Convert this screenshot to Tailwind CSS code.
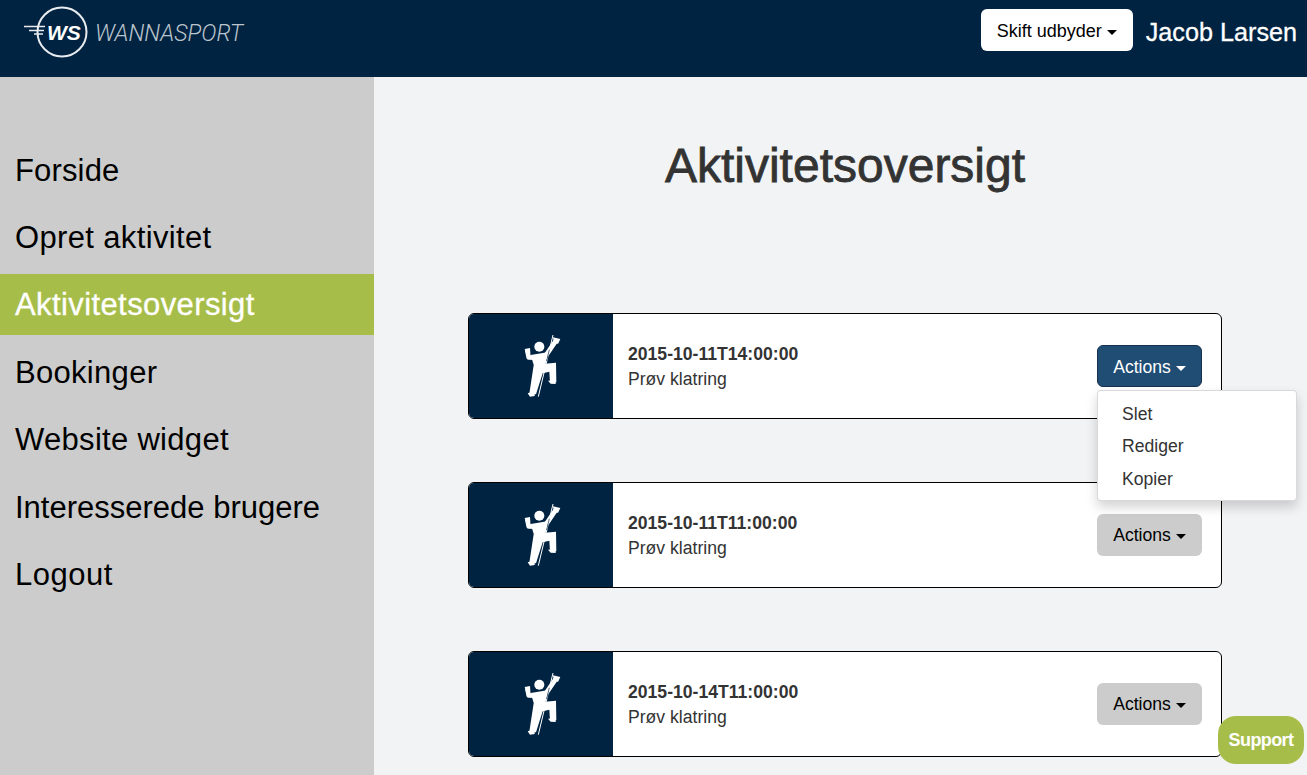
<!DOCTYPE html>
<html lang="en">
<head>
    <meta charset="UTF-8">
    <meta name="viewport" content="width=device-width, initial-scale=1.0">
    <title>Aktivitetsoversigt</title>
    <script src="https://cdn.jsdelivr.net/npm/@tailwindcss/browser@4"></script>
</head>
<body class="relative h-screen overflow-hidden bg-[#f2f3f5] font-['Liberation_Sans',Arial,sans-serif] text-[#333333]">
    <!-- top bar -->
    <header class="flex h-[77px] items-start justify-between bg-[#002342] pl-[24px] pr-[10px]">
        <div class="flex items-center pt-[6px]">
            <svg class="h-[52px] w-[66px] text-white" viewBox="0 0 66 52" fill="none">
                <circle cx="38" cy="26" r="24.5" stroke="#e8ecef" stroke-width="2"/>
                <path d="M0 20.5H21M5 24.5H20M10 28H19" stroke="#e8ecef" stroke-width="1.5"/>
                <text x="23" y="34" fill="#fff" font-family="Liberation Sans" font-size="21" font-weight="700" font-style="italic">WS</text>
            </svg>
            <span class="ml-[5px] mt-[2px] font-['Roboto',sans-serif] text-[23px] font-light italic leading-none text-[#bcc5cc]">WANNASPORT</span>
        </div>
        <div class="flex items-start pt-[9px]">
            <button class="flex h-[42px] w-[152px] items-center justify-center rounded-[6px] bg-white pt-[2px] text-[18px] text-black">
                Skift udbyder<span class="ml-[5px] mt-[2px] border-x-[5px] border-t-[5px] border-x-transparent border-t-black"></span>
            </button>
            <span class="ml-[13px] text-[25.2px] leading-[46px] text-white [-webkit-text-stroke:0.3px_white]">Jacob Larsen</span>
        </div>
    </header>

    <div class="flex h-[698px]">
        <!-- side menu -->
        <nav class="flex w-[374px] shrink-0 flex-col gap-[6.5px] bg-[#cccccc] pt-[62px] text-[31px] leading-[61px] text-black">
            <a class="px-[15px] pt-[2px] leading-[59px] tracking-[0.15px]">Forside</a>
            <a class="px-[15px] tracking-[0.35px]">Opret aktivitet</a>
            <a class="bg-[#a7bd49] px-[15px] tracking-[0.4px] text-white [-webkit-text-stroke:0.3px_white]">Aktivitetsoversigt</a>
            <a class="px-[15px] tracking-[0.3px]">Bookinger</a>
            <a class="px-[15px] tracking-[0.3px]">Website widget</a>
            <a class="px-[15px]">Interesserede brugere</a>
            <a class="px-[15px] tracking-[0.5px]">Logout</a>
        </nav>

        <main class="w-[848px] pl-[94px]">
            <h1 class="mb-[119px] mt-[61px] w-[754px] text-center text-[48px] leading-[56px] [-webkit-text-stroke:0.8px_#333333]">Aktivitetsoversigt</h1>

            <div class="flex w-[754px] flex-col gap-[63px]">
                <!-- open dropdown sits on the first card -->
                <div class="relative flex h-[106px] rounded-[6px] border border-black bg-white">
                    <div class="flex w-[144px] items-center justify-center rounded-l-[5px] bg-[#002342]">
                        <svg class="mb-[2px] h-[80px] w-[70px]" viewBox="0 0 210 240" fill="none">
                            <path d="M141 30L97 215" stroke="#fff" stroke-width="3"/>
                            <circle cx="100" cy="65" r="15" fill="#fff"/>
                            <path d="M64 76L68 97L90 98M122 88L150 47" stroke="#fff" stroke-width="14" stroke-linejoin="round"/>
                            <path d="M56 72L72 69L73 84L60 86ZM141 37L163 42L156 57L143 50Z" fill="#fff"/>
                            <path d="M74 90L128 81L118 120L84 122Z" fill="#fff"/>
                            <path d="M83 121L117 116L150 113L151 172L132 172L130 140L110 145L90 208L70 206Z" fill="#fff"/>
                            <path d="M65 205L86 199L86 213L72 215ZM126 167L149 166L149 177L134 176Z" fill="#fff"/>
                            <path d="M130 74L122 108" stroke="#002342" stroke-width="2"/>
                        </svg>
                    </div>
                    <div class="flex flex-1 items-center justify-between pl-[15px] pr-[19px]">
                        <div class="pt-[2px] text-[17.6px] leading-[25px]">
                            <div class="font-bold">2015-10-11T14:00:00</div>
                            <div>Prøv klatring</div>
                        </div>
                        <button class="flex h-[42px] w-[105px] items-center justify-center rounded-[6px] border border-[#17324d] bg-[#204d74] pt-[2px] text-[17.6px] text-white">
                            Actions<span class="ml-[5px] mt-[2px] border-x-[5px] border-t-[5px] border-x-transparent border-t-white"></span>
                        </button>
                    </div>
                    <ul class="absolute left-[628px] top-[76px] z-10 h-[111px] w-[200px] rounded-[4px] border border-black/15 bg-white py-[7px] text-[17.6px] leading-[32.4px] shadow-[0_6px_12px_rgba(0,0,0,0.175)]">
                        <li class="px-[24px]">Slet</li>
                        <li class="px-[24px]">Rediger</li>
                        <li class="px-[24px]">Kopier</li>
                    </ul>
                </div>

                <div class="flex h-[106px] rounded-[6px] border border-black bg-white">
                    <div class="flex w-[144px] items-center justify-center rounded-l-[5px] bg-[#002342]">
                        <svg class="mb-[2px] h-[80px] w-[70px]" viewBox="0 0 210 240" fill="none">
                            <path d="M141 30L97 215" stroke="#fff" stroke-width="3"/>
                            <circle cx="100" cy="65" r="15" fill="#fff"/>
                            <path d="M64 76L68 97L90 98M122 88L150 47" stroke="#fff" stroke-width="14" stroke-linejoin="round"/>
                            <path d="M56 72L72 69L73 84L60 86ZM141 37L163 42L156 57L143 50Z" fill="#fff"/>
                            <path d="M74 90L128 81L118 120L84 122Z" fill="#fff"/>
                            <path d="M83 121L117 116L150 113L151 172L132 172L130 140L110 145L90 208L70 206Z" fill="#fff"/>
                            <path d="M65 205L86 199L86 213L72 215ZM126 167L149 166L149 177L134 176Z" fill="#fff"/>
                            <path d="M130 74L122 108" stroke="#002342" stroke-width="2"/>
                        </svg>
                    </div>
                    <div class="flex flex-1 items-center justify-between pl-[15px] pr-[19px]">
                        <div class="pt-[2px] text-[17.6px] leading-[25px]">
                            <div class="font-bold">2015-10-11T11:00:00</div>
                            <div>Prøv klatring</div>
                        </div>
                        <button class="flex h-[42px] w-[105px] items-center justify-center rounded-[6px] bg-[#cccccc] pt-[1px] text-[17.6px] text-black">
                            Actions<span class="ml-[5px] mt-[2px] border-x-[5px] border-t-[5px] border-x-transparent border-t-black"></span>
                        </button>
                    </div>
                </div>

                <div class="flex h-[106px] rounded-[6px] border border-black bg-white">
                    <div class="flex w-[144px] items-center justify-center rounded-l-[5px] bg-[#002342]">
                        <svg class="mb-[2px] h-[80px] w-[70px]" viewBox="0 0 210 240" fill="none">
                            <path d="M141 30L97 215" stroke="#fff" stroke-width="3"/>
                            <circle cx="100" cy="65" r="15" fill="#fff"/>
                            <path d="M64 76L68 97L90 98M122 88L150 47" stroke="#fff" stroke-width="14" stroke-linejoin="round"/>
                            <path d="M56 72L72 69L73 84L60 86ZM141 37L163 42L156 57L143 50Z" fill="#fff"/>
                            <path d="M74 90L128 81L118 120L84 122Z" fill="#fff"/>
                            <path d="M83 121L117 116L150 113L151 172L132 172L130 140L110 145L90 208L70 206Z" fill="#fff"/>
                            <path d="M65 205L86 199L86 213L72 215ZM126 167L149 166L149 177L134 176Z" fill="#fff"/>
                            <path d="M130 74L122 108" stroke="#002342" stroke-width="2"/>
                        </svg>
                    </div>
                    <div class="flex flex-1 items-center justify-between pl-[15px] pr-[19px]">
                        <div class="pt-[2px] text-[17.6px] leading-[25px]">
                            <div class="font-bold">2015-10-14T11:00:00</div>
                            <div>Prøv klatring</div>
                        </div>
                        <button class="flex h-[42px] w-[105px] items-center justify-center rounded-[6px] bg-[#cccccc] pt-[1px] text-[17.6px] text-black">
                            Actions<span class="ml-[5px] mt-[2px] border-x-[5px] border-t-[5px] border-x-transparent border-t-black"></span>
                        </button>
                    </div>
                </div>
            </div>
        </main>
    </div>

    <!-- support bubble -->
    <button class="absolute left-[1218px] top-[716px] flex h-[48px] w-[86px] items-center justify-center rounded-[18px] bg-[#a7bd49] text-[18px] font-bold tracking-[-0.6px] text-white">Support</button>
</body>
</html>
